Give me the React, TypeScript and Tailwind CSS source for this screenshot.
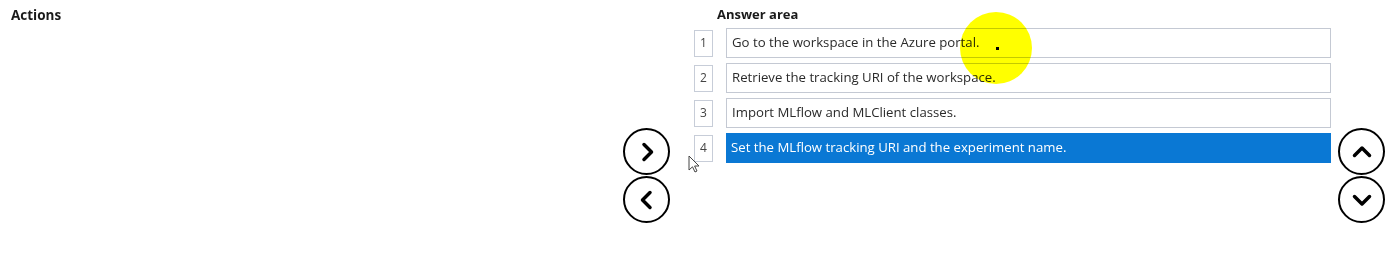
import type { ReactNode } from "react";

const font = { fontFamily: '"Open Sans", "Liberation Sans", sans-serif' };

function CircleButton({ children }: { children: ReactNode }) {
  return (
    <div className="w-[47px] h-[47px] rounded-full border-[2.5px] border-black flex items-center justify-center bg-white">
      <svg width="24" height="24" viewBox="0 0 24 24" fill="none" stroke="black" strokeWidth="3.5" strokeLinecap="round" strokeLinejoin="round">
        {children}
      </svg>
    </div>
  );
}

const steps = [
  "Go to the workspace in the Azure portal.",
  "Retrieve the tracking URI of the workspace.",
  "Import MLflow and MLClient classes.",
  "Set the MLflow tracking URI and the experiment name.",
];

export default function App() {
  return (
    <div className="relative flex w-[1397px] h-[276px] bg-white text-[#222]" style={font}>
      <div className="w-[623px] shrink-0 pl-[11px] pt-[5px]">
        <h2 className="text-[13.5px] font-bold text-[#1a1a1a]">Actions</h2>
      </div>

      <div className="w-[48px] shrink-0 flex flex-col gap-[1px] pt-[128px]">
        <CircleButton>
          <path d="M9 4.5l7.5 7.5-7.5 7.5" />
        </CircleButton>
        <CircleButton>
          <path d="M15 4.5l-7.5 7.5 7.5 7.5" />
        </CircleButton>
      </div>

      <div className="w-[660px] shrink-0 pl-[23px] pt-[5px]">
        <h2 className="ml-[23px] text-[13px] font-bold text-[#1a1a1a] h-[23px]">Answer area</h2>
        <div className="flex flex-col gap-[5px]">
          {steps.map((s, i) => {
            const selected = i === 3;
            return (
              <div key={i} className="flex items-center h-[30px]">
                <div className="w-[19px] h-[27px] shrink-0 border border-[#c7cdd8] flex items-center justify-center text-[12px] text-[#444]">
                  {i + 1}
                </div>
                <div
                  className={
                    selected
                      ? "ml-[13px] w-[605px] shrink-0 h-[30px] flex items-center pl-[5px] text-[13.2px] bg-[#0a78d4] text-white"
                      : "ml-[13px] w-[605px] shrink-0 h-[30px] flex items-center pl-[5px] text-[13.2px] border border-[#c4c9d3] text-[#2a2a2a]"
                  }
                >
                  {s}
                </div>
              </div>
            );
          })}
        </div>
      </div>

      <div className="flex flex-col gap-[1px] pt-[128px] pl-[7px]">
        <CircleButton>
          <path d="M4.5 15.5l7.5-7.5 7.5 7.5" />
        </CircleButton>
        <CircleButton>
          <path d="M4.5 8.5l7.5 7.5 7.5-7.5" />
        </CircleButton>
      </div>

      {/* cursor highlight */}
      <div className="absolute left-[960px] top-[12px] w-[72px] h-[72px] rounded-full bg-[#ffff00] mix-blend-multiply pointer-events-none" />
      <div className="absolute left-[996px] top-[47px] w-[3px] h-[3px] bg-black" />

      {/* mouse pointer */}
      <svg className="absolute left-[688px] top-[155px]" width="12" height="18" viewBox="0 0 12 18">
        <path d="M1 1v14l3.5-3.2 2.5 5.2 2-1-2.4-5H11z" fill="white" stroke="#444" strokeWidth="1" strokeLinejoin="round" />
      </svg>
    </div>
  );
}
